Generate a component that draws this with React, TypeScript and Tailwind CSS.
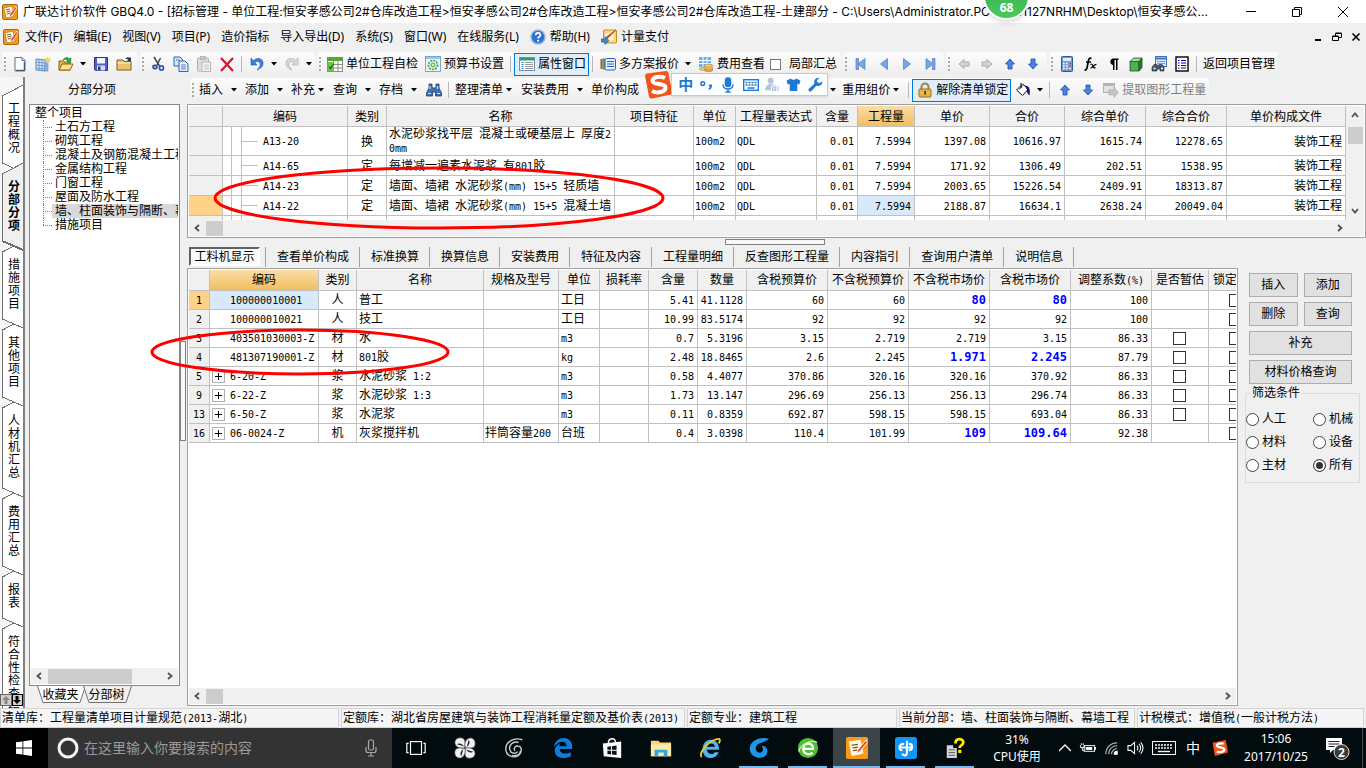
import React from 'react';

const UI_FONT = "font-['Noto_Sans','Noto_Sans_CJK_SC',sans-serif]";

const Sim: React.FC<{ text: string; bold?: boolean }> = ({ text, bold }) => (
  <>
    {text.split(/([\x20-\x7e]+)/).map((part, i) =>
      i % 2 ? (
        <span
          key={i}
          className={
            bold
              ? "font-['DejaVu_Sans_Mono',monospace] text-[12px] font-bold text-[#0000ff]"
              : "font-['DejaVu_Sans_Mono',monospace] text-[10px]"
          }
        >
          {part}
        </span>
      ) : (
        part
      )
    )}
  </>
);

const ICONS: Record<string, React.ReactNode> = {
  app: (
    <>
      <rect x="0.5" y="0.5" width="15" height="15" rx="1.5" fill="#f59a1c" stroke="#b5650a" />
      <path d="M2 4l8-2 2 10-8 2z" fill="#fffbe8" stroke="#a8660c" strokeWidth=".6" />
      <path d="M4 6l4-1M4.500 8l4-1M5 10l4-1" stroke="#7a4a10" strokeWidth=".9" />
      <path d="M14 2L8 10l-1 3 3-1.500L15 4z" fill="#e04a12" stroke="#fff" strokeWidth=".7" />
    </>
  ),
  new: (
    <>
      <path d="M3 1.500h7l3 3V15H3z" fill="#fdfeff" stroke="#5b7391" />
      <path d="M10 1.500v3h3" fill="#cfe0f4" stroke="#5b7391" />
      <path d="M4 14.300h8.300V6" stroke="#2b4160" fill="none" />
    </>
  ),
  gridNew: (
    <>
      <path d="M1 3l9 1v11l-9-1z" fill="#dbe9fb" stroke="#5d86bd" />
      <path d="M1 6l9 1M1 9l9 1M1 12l9 1M4 3.500v11M7 4v11" stroke="#5d86bd" strokeWidth=".8" />
      <path d="M10 5h3v10h-3z" fill="#8fb3de" stroke="#5d86bd" strokeWidth=".6" />
      <path d="M12.500 0l.7 2.500L16 2l-1.600 2L16 6l-2.800-.5L12.500 8l-.7-2.500L9 6l1.600-2L9 2l2.800.5z" fill="#ffd23a" />
    </>
  ),
  open: (
    <>
      <path d="M1 5h5l1 2h5v7H1z" fill="#e4b64a" stroke="#8a6416" />
      <path d="M1 14l3-6h11l-3 6z" fill="#ffe18a" stroke="#8a6416" />
      <path d="M5 4c2-3 5-3 6-1l2-1-.5 5-4.500-1.500L9.700 4.500C9 3 7 3 5 4z" fill="#2fae2f" stroke="#12701a" strokeWidth=".6" />
    </>
  ),
  save: (
    <>
      <path d="M1.500 1.500h13v13h-12l-1-1z" fill="#5363c4" stroke="#2a3580" />
      <rect x="4" y="2" width="8" height="5.500" fill="#f3f5ff" />
      <rect x="4" y="9.500" width="8" height="5" fill="#d6dbf2" />
      <rect x="5" y="10.500" width="2.500" height="4" fill="#2a3580" />
    </>
  ),
  folder: (
    <>
      <path d="M1 4h6l1 1.500h7V14H1z" fill="#e9c46c" stroke="#7a5c22" />
      <path d="M1.500 7h13" stroke="#fff2c4" />
      <path d="M9 3c2-2 4-2 5-1l1-1v4h-4l1.300-1.300C11.500 3 10.500 3 9 3z" fill="#1d3763" />
    </>
  ),
  cut: (
    <>
      <path d="M4 1l5.500 9M10.500 2L7 9" stroke="#3b4a60" strokeWidth="1.500" fill="none" />
      <ellipse cx="5" cy="11" rx="2" ry="1.600" fill="none" stroke="#1d4da5" strokeWidth="1.600" />
      <ellipse cx="11.500" cy="12" rx="2" ry="2.200" fill="none" stroke="#1d4da5" strokeWidth="1.600" />
    </>
  ),
  copy: (
    <>
      <path d="M1 1h6l2.500 2.500V10H1z" fill="#d7e7fb" stroke="#2f62ad" />
      <path d="M6 5h6l3 3v7.500H6z" fill="#e9f2ff" stroke="#2f62ad" />
      <path d="M8 9h5M8 11h5M8 13h5M3 4h4" stroke="#4f80c6" />
    </>
  ),
  paste: (
    <>
      <rect x="1.500" y="2" width="11" height="13" rx="1" fill="#dedede" stroke="#b0b0b0" />
      <rect x="4.500" y="0.500" width="5" height="3" fill="#c6c6c6" stroke="#aaa" strokeWidth=".7" />
      <path d="M6 6h8.500v9.500H6z" fill="#f5f5f5" stroke="#b5b5b5" />
      <path d="M8 9h5M8 11h5M8 13h5" stroke="#c4c4c4" />
    </>
  ),
  del: <path d="M2 2l12 13M14 2L2 15" stroke="#d4142c" strokeWidth="2.200" fill="none" />,
  undo: <path d="M2 2v7h6L5.800 6.800C9 4 12 6 11 9.500c-.4 1.600-1.600 3-3 4.500 4-1.500 6.500-4 6-7.500C13.500 2 8 1 4.300 4.700z" fill="#3c7fe0" stroke="#2459b0" strokeWidth=".6" />,
  redo: <path d="M14 2v7H8l2.200-2.200C7 4 4 6 5 9.500c.4 1.600 1.600 3 3 4.500-4-1.500-6.500-4-6-7.500C2.500 2 8 1 11.700 4.700z" fill="#d9d9d9" stroke="#b5b5b5" strokeWidth=".8" />,
  check: (
    <>
      <rect x="0.500" y="1.500" width="15" height="14" fill="#fff" stroke="#8c8c8c" />
      <rect x="0" y="1" width="16" height="4" fill="#55a63a" />
      <path d="M6.500 5v10M11 5v10M1 8.500h14M1 12h14" stroke="#8c8c8c" />
      <rect x="1" y="6" width="6" height="9" fill="#6fc04e" />
      <path d="M2 10.500l1.500 2L6.500 8" stroke="#1d5d14" fill="none" strokeWidth="1.200" />
    </>
  ),
  gear: (
    <>
      <rect x="0.500" y="0.500" width="15" height="15" fill="#eaf4fb" stroke="#79a8cc" />
      <rect x="1" y="1" width="14" height="2" fill="#9cc7e6" />
      <circle cx="8" cy="9" r="4.500" fill="none" stroke="#4fa04a" strokeWidth="1.700" strokeDasharray="2 1" />
      <circle cx="8" cy="9" r="2" fill="#d4efcf" stroke="#4fa04a" />
    </>
  ),
  props: (
    <>
      <rect x="0.500" y="1.500" width="15" height="13" fill="#fff" stroke="#7d8fa6" />
      <rect x="1" y="2" width="14" height="2.500" fill="#2e9c74" />
      <path d="M2.500 6.500h2M2.500 8.500h2M2.500 10.500h2M2.500 12.500h2" stroke="#2e7fc4" />
      <path d="M6 6.500h8M6 8.500h8M6 10.500h8M6 12.500h8" stroke="#999" />
    </>
  ),
  multi: (
    <>
      <path d="M0.500 3h2v10h-2z" fill="#e23b2e" />
      <path d="M2.500 2.500h2.500v11H2.500z" fill="#4bae4a" />
      <rect x="5" y="2.500" width="10.500" height="11.500" rx="1.500" fill="#e8f0ff" stroke="#2c5fc0" />
      <path d="M7 5.500h7M7 8h7M7 10.500h7" stroke="#2c5fc0" strokeWidth="1.200" />
    </>
  ),
  fee: (
    <>
      <rect x="1" y="1" width="12" height="10" fill="#65b2ea" />
      <path d="M1 4.500h12M1 7.500h12M5 1v10M9 1v10" stroke="#fff" />
      <ellipse cx="10.500" cy="14" rx="4.500" ry="1.600" fill="#e6b04b" stroke="#a87320" strokeWidth=".6" />
      <ellipse cx="10.500" cy="11.800" rx="4.500" ry="1.600" fill="#f4cd7c" stroke="#a87320" strokeWidth=".6" />
      <ellipse cx="10.500" cy="9.600" rx="4.500" ry="1.600" fill="#f4cd7c" stroke="#a87320" strokeWidth=".6" />
      <ellipse cx="4.500" cy="13" rx="3" ry="1.400" fill="#f4cd7c" stroke="#a87320" strokeWidth=".6" />
    </>
  ),
  first: <path d="M3 2.500h2.500v5L12 2.500v11l-6.500-5v5H3z" fill="#7aa4ec" stroke="#3f6cc0" strokeWidth=".6" />,
  prev: <path d="M11.500 2.500v11L4.500 8z" fill="#7aa4ec" stroke="#3f6cc0" strokeWidth=".6" />,
  next: <path d="M4.500 2.500v11l7-5.500z" fill="#7aa4ec" stroke="#3f6cc0" strokeWidth=".6" />,
  last: <path d="M13 2.500h-2.500v5L4 2.500v11l6.500-5v5H13z" fill="#7aa4ec" stroke="#3f6cc0" strokeWidth=".6" />,
  left: <path d="M3 8l5-4.500V6h5v4H8v2.500z" fill="#d2d2d2" stroke="#acacac" />,
  right: <path d="M13 8L8 3.500V6H3v4h5v2.500z" fill="#d2d2d2" stroke="#acacac" />,
  up: <path d="M8 3l4.500 5H10v5H6V8H3.500z" fill="#4a83e6" stroke="#1d4ba5" strokeWidth=".8" />,
  down: <path d="M8 13L3.500 8H6V3h4v5h2.500z" fill="#4a83e6" stroke="#1d4ba5" strokeWidth=".8" />,
  calc: (
    <>
      <rect x="2.500" y="0.500" width="11" height="15" rx="1" fill="#7199d6" stroke="#2f559a" />
      <rect x="4" y="2" width="8" height="3" fill="#dcecff" />
      <path d="M4 7.500h8M4 10h8M4 12.500h8" stroke="#fff" strokeWidth="1.500" strokeDasharray="1.700 1.300" />
      <path d="M10 7.500h2M10 10h2" stroke="#e5402a" strokeWidth="1.300" />
    </>
  ),
  fx: (
    <>
      <path d="M9.500 2.500c-2-1-2.500 0-3 2L5 12c-.4 1.500-1 2.300-2.500 2M4 6h5" stroke="#000" strokeWidth="1.700" fill="none" />
      <path d="M8.500 8.500c1.500-.8 2 0 2.500 1.500s1 2.500 2.500 1.500M14.500 8.500c-2-.5-4 3.500-6 3.500" stroke="#000" strokeWidth="1.200" fill="none" />
    </>
  ),
  para: <path d="M13.500 2.500h-6a3.500 3.500 0 000 6.500H8v5h1.500V4h1.500v10h1.500V4h1z" fill="#000" />,
  cube: (
    <>
      <path d="M2 5.500h9V15H2z" fill="#4fae56" stroke="#17551c" strokeWidth=".8" />
      <path d="M2 5.500L5.500 2H14l-3 3.500z" fill="#a4dba5" stroke="#17551c" strokeWidth=".8" />
      <path d="M11 5.500L14 2v9.500L11 15z" fill="#237a2b" stroke="#17551c" strokeWidth=".8" />
    </>
  ),
  print: (
    <>
      <rect x="4.500" y="0.500" width="11" height="10" fill="#dbe9ff" stroke="#4472b8" />
      <path d="M5 2.500h10" stroke="#4472b8" strokeWidth="2" />
      <path d="M6 5.500h8M6 7.500h8" stroke="#7a9dd2" />
      <path d="M1 11l2-2.500h3l1 1.500 1-1.500h3l2 2.500v4H9v-2H6v2H1z" fill="#47566e" stroke="#232d3d" strokeWidth=".6" />
      <path d="M2.500 12.500h2M10 12.500h2" stroke="#fff" strokeWidth="1.400" />
    </>
  ),
  list: (
    <>
      <rect x="2" y="1" width="12" height="14" fill="#fff" stroke="#000" strokeWidth="1.400" />
      <path d="M4 4.500h1.500M4 7h1.500M4 9.500h1.500M4 12h1.500" stroke="#00f" />
      <path d="M7 4.500h5M7 7h5M7 9.500h5M7 12h5" stroke="#0000a8" />
    </>
  ),
  find: (
    <>
      <path d="M3 2h3v3l1 1h2l1-1V2h3v4l2.500 5v3H9.500v-4h-3v4H.5v-3L3 6z" fill="#3f6fae" stroke="#1f3f70" strokeWidth=".8" />
      <path d="M2 11.500h3M11 11.500h3M4 4v3M11.500 4v3" stroke="#c9defa" strokeWidth="1.200" />
    </>
  ),
  lock: (
    <>
      <path d="M4.500 7V5a3.500 3.500 0 017 0v2" stroke="#9a8350" strokeWidth="2" fill="none" />
      <rect x="2" y="7" width="12" height="8" rx="1" fill="#f2bd4c" stroke="#99691a" />
      <path d="M3 9h10M3 13h10" stroke="#d99a26" strokeWidth=".7" />
      <rect x="7.200" y="9" width="1.800" height="3.500" fill="#5c3d0c" />
    </>
  ),
  bucket: (
    <>
      <path d="M1.500 8l6-6 6 5-6 6.500z" fill="#fff" stroke="#111" />
      <path d="M4 7.500L8 3.500M6 1v5" stroke="#111" />
      <path d="M9.500 3.500c5 0 6 4 5 10-1.500-1-3-3-2.500-6z" fill="#10107a" />
    </>
  ),
  extract: (
    <>
      <rect x="0.500" y="1.500" width="11" height="9" fill="#e3e3e3" stroke="#b0b0b0" />
      <rect x="0" y="1" width="12" height="3" fill="#b5b5b5" />
      <path d="M6 8h5V5.500l4.500 5-4.500 5V13H6z" fill="#c4c4c4" stroke="#a6a6a6" strokeWidth=".6" />
    </>
  ),
  help: (
    <>
      <circle cx="8" cy="8" r="7" fill="#2c73d2" stroke="#9cb8dc" strokeWidth="1.500" />
      <path d="M5.800 6.200c0-3 4.600-3 4.600-.2 0 1.700-2.300 1.800-2.300 3.500" stroke="#fff" strokeWidth="1.700" fill="none" />
      <circle cx="8.100" cy="11.800" r="1.100" fill="#fff" />
    </>
  ),
  pay: (
    <>
      <rect x="2.500" y="1" width="13" height="13" rx="1" fill="#fdd58a" stroke="#cf8d1c" />
      <path d="M4 5l8-2 1 8-7 1z" fill="#fff5d8" />
      <path d="M15 1L7 9l-2 1 1-2.500 4-3z" fill="#d84a1b" stroke="#8e2a0a" strokeWidth=".5" />
      <path d="M0 10h4V7.500L8 11.500l-4 4V13H0z" fill="#2b8fd8" stroke="#145c95" strokeWidth=".6" />
    </>
  ),
};

const Icon: React.FC<{ name: string; className?: string }> = ({ name, className = 'size-4' }) => (
  <svg viewBox="0 0 16 16" className={`${className} shrink-0`} fill="none" aria-hidden="true">
    {ICONS[name]}
  </svg>
);

const Tool = ({ icon, text, active, muted }: { icon: string; text?: string; active?: boolean; muted?: boolean }) => (
  <button
    aria-label={text || icon}
    className={`flex items-center h-[23px] shrink-0 whitespace-nowrap ${text && !active ? 'pr-[3px]' : ''} ${
      active ? 'border border-[#0078d7] bg-[#e1eefa] pr-[2px]' : ''
    } ${muted ? 'text-[#808080]' : ''}`}
  >
    <span className="w-[23px] flex justify-center">
      <Icon name={icon} />
    </span>
    {text}
  </button>
);

const Triangle = () => (
  <svg viewBox="0 0 6 4" className="w-[6px] h-[4px]" aria-hidden="true">
    <path d="M0 0h6L3 3.500z" fill="#000" />
  </svg>
);

const Drop = () => (
  <button aria-label="下拉" className="w-3 h-[23px] flex items-center justify-center shrink-0">
    <Triangle />
  </button>
);

const TextMenu = ({ text, tight }: { text: string; tight?: boolean }) => (
  <button className="flex items-center h-[23px] shrink-0 px-[3px] whitespace-nowrap">
    {text}
    <span className={`flex justify-end ${tight ? 'w-[9px]' : 'w-[14px]'}`}>
      <Triangle />
    </span>
    <span className={tight ? 'w-[3px]' : 'w-[2px]'} />
  </button>
);

const Sep = () => (
  <span className="w-[7px] flex justify-center shrink-0">
    <span className="w-px h-4 bg-[#b8b8b8]" />
  </span>
);

const Handle = () => (
  <span className="w-[6px] flex justify-center shrink-0">
    <span className="w-0 h-[14px] border-l-2 border-dotted border-[#a9a9a9]" />
  </span>
);

const Group: React.FC<{ children: React.ReactNode }> = ({ children }) => (
  <div className="flex items-center h-[25px] shrink-0 rounded-sm bg-linear-to-b from-[#fcfcfc] to-[#ededed]">{children}</div>
);

const TitleBar = () => (
  <header className="flex items-center h-[23px] bg-white pl-[2px] shrink-0">
    <Icon name="app" />
    <h1 className="flex-1 pl-[5px] truncate font-['Inter','Noto_Sans_CJK_SC',sans-serif]">
      广联达计价软件 GBQ4.0 - [招标管理 - 单位工程:恒安孝感公司2#仓库改造工程&gt;恒安孝感公司2#仓库改造工程&gt;恒安孝感公司2#仓库改造工程-土建部分 - C:\Users\Administrator.PC-20141127NRHM\Desktop\恒安孝感公...
    </h1>
    <div className="flex shrink-0">
      <button aria-label="最小化" className="w-[46px] flex justify-center">
        <svg viewBox="0 0 12 12" className="size-3"><path d="M1 5.500h10" stroke="#000" /></svg>
      </button>
      <button aria-label="还原" className="w-[46px] flex justify-center">
        <svg viewBox="0 0 12 12" className="size-3" fill="none" stroke="#000"><path d="M1.500 3.500h7v7h-7zM3.500 3V1.500h7v7H9" /></svg>
      </button>
      <button aria-label="关闭" className="w-[46px] flex justify-center">
        <svg viewBox="0 0 12 12" className="size-3" stroke="#000"><path d="M1 1l10 10M11 1L1 11" /></svg>
      </button>
    </div>
  </header>
);

const MENUS = ['文件(F)', '编辑(E)', '视图(V)', '项目(P)', '造价指标', '导入导出(D)', '系统(S)', '窗口(W)', '在线服务(L)'];

const MenuBar = () => (
  <nav className="flex items-center h-7 pl-[3px] pr-1 shrink-0">
    <Icon name="app" />
    <div className="flex gap-[11px] pl-[6px] flex-1">
      {MENUS.map((m) => (
        <button key={m}>{m}</button>
      ))}
      <button className="flex items-center gap-1"><Icon name="help" />帮助(H)</button>
      <button className="flex items-center gap-1"><Icon name="pay" />计量支付</button>
    </div>
    <div className="flex gap-[7px]">
      <button aria-label="最小化窗口"><svg viewBox="0 0 12 12" className="size-3"><path d="M3 9h6" stroke="#000" strokeWidth="2" /></svg></button>
      <button aria-label="还原窗口"><svg viewBox="0 0 12 12" className="size-3" fill="none" stroke="#000"><path d="M1.500 5.500h6v4h-6zM4.500 5V2.500h6v4H8M1.500 5h6M4.500 2h6" /></svg></button>
      <button aria-label="关闭窗口"><svg viewBox="0 0 12 12" className="size-3" stroke="#000" strokeWidth="1.600"><path d="M2.500 2.500l7 7M9.500 2.500l-7 7" /></svg></button>
    </div>
  </nav>
);

const MainToolbar = () => (
  <div className="flex items-center gap-[2px] h-[26px] pl-[2px] shrink-0">
    <Group>
      <Handle /><Tool icon="new" /><Tool icon="gridNew" /><Tool icon="open" /><Drop /><Tool icon="save" /><Tool icon="folder" />
      <span className="w-[3px]" />
    </Group>
    <Group>
      <Handle /><Tool icon="cut" /><Tool icon="copy" /><Tool icon="paste" /><Tool icon="del" /><Sep />
      <Tool icon="undo" /><Drop /><Tool icon="redo" /><Drop />
    </Group>
    <Group>
      <Handle /><Tool icon="check" text="单位工程自检" /><Tool icon="gear" text="预算书设置" /><Sep />
      <Tool icon="props" text="属性窗口" active /><Sep />
      <Tool icon="multi" text="多方案报价" /><Drop /><Tool icon="fee" text="费用查看" />
      <label className="flex items-center gap-2 pr-1 whitespace-nowrap">
        <input type="checkbox" className="appearance-none size-[11px] ml-[2px] border border-[#777] bg-white" />
        局部汇总
      </label>
    </Group>
    <Group>
      <Handle /><Tool icon="first" /><Tool icon="prev" /><Tool icon="next" /><Tool icon="last" />
      <span className="w-[3px]" />
    </Group>
    <Group>
      <Handle /><Tool icon="left" /><Tool icon="right" /><Tool icon="up" /><Tool icon="down" />
      <span className="w-[3px]" />
    </Group>
    <Group>
      <Handle /><Tool icon="calc" /><Tool icon="fx" /><Tool icon="para" /><Tool icon="cube" /><Tool icon="print" /><Tool icon="list" /><Sep />
      <button className="px-[3px] whitespace-nowrap">返回项目管理</button>
    </Group>
  </div>
);

const ImeBar = () => (
  <div className="absolute -top-2 left-[5px] z-20 flex items-center pointer-events-none">
    <svg viewBox="0 0 28 28" className="size-7 shrink-0">
      <path d="M1 5Q1 3 3 2.600L22 0q2-.2 2.400 2L28 21q.3 2.200-2 2.700L8 27.500q-2.400.5-3-2z" fill="#f2541b" />
      <path d="M21 7C16 4.500 8.500 6 8.500 10s13 2 13 6.500-8 6.500-13.500 3.500" stroke="#fff" strokeWidth="4" fill="none" />
    </svg>
    <div className="flex items-center justify-between w-[157px] h-[23px] -ml-px pl-[6px] pr-1 bg-[#fdfeff] border border-[#b9cbe6] shadow-sm">
      <span className="text-[15px] leading-none font-bold text-[#1c7ad0]">中</span>
      <svg viewBox="0 0 16 16" className="size-[15px]" fill="none" stroke="#1c7ad0"><circle cx="4" cy="7" r="2" strokeWidth="1.600" /><path d="M10.500 9h2.500c0 2-.5 3-2.500 4" strokeWidth="2" /></svg>
      <svg viewBox="0 0 16 16" className="size-4" fill="none" stroke="#1c7ad0" strokeWidth="1.500"><rect x="5.500" y="1" width="5" height="8.500" rx="2.500" fill="#1c7ad0" /><path d="M3 7.500c0 6 10 6 10 0M8 12v3M5.500 15h5" /></svg>
      <svg viewBox="0 0 16 14" className="w-4 h-[14px]" fill="none" stroke="#1c7ad0"><rect x="0.700" y="1.700" width="14.600" height="10.600" strokeWidth="1.400" /><path d="M2.500 4.500h11M2.500 7h11" strokeWidth="1.500" strokeDasharray="2 1" /><path d="M4.500 10h7" strokeWidth="1.500" /></svg>
      <svg viewBox="0 0 16 16" className="size-[15px]" fill="#b4c3da"><circle cx="6" cy="4" r="3.200" /><path d="M0 14c0-8 10-8 12-4v4z" /><path d="M7 9.500h8.500v6H7z" stroke="#fff" /><path d="M9.500 11v3.500M12 11h2v3.500h-2zM12 12.700h2" stroke="#fff" strokeWidth=".8" /></svg>
      <svg viewBox="0 0 16 16" className="size-[15px]" fill="#1c7ad0"><path d="M5 1.500c1 2 5 2 6 0l4.500 2.500-1.500 4-2-.5V15H4V7.500l-2 .5L.5 4z" /></svg>
      <svg viewBox="0 0 16 16" className="size-4" fill="#1c7ad0"><path d="M15.500 4.500a4.500 4.500 0 01-6.200 4.200L3.500 15 1 12.700l6.300-5.900A4.500 4.500 0 0112.500.8L10 3.300l.5 2.200 2.200.5z" /></svg>
    </div>
  </div>
);

const EditToolbar = () => (
  <div className="flex items-center h-[26px] pl-[3px] shrink-0">
    <Group>
      <Handle />
      <TextMenu text="插入" /><TextMenu text="添加" /><TextMenu text="补充" tight /><TextMenu text="查询" /><TextMenu text="存档" />
      <Tool icon="find" /><Sep />
      <TextMenu text="整理清单" tight /><TextMenu text="安装费用" />
      <button className="pl-[3px] whitespace-nowrap">单价构成</button>
      <div className="relative w-[188px] h-[23px]"><ImeBar /></div>
      <Drop />
      <TextMenu text="重用组价" tight /><Sep />
      <Tool icon="lock" text="解除清单锁定" active />
      <Tool icon="bucket" /><Drop /><Sep />
      <Tool icon="up" /><Tool icon="down" /><Tool icon="extract" text="提取图形工程量" muted />
    </Group>
  </div>
);

const SIDE_TABS = ['工程概况', '分部分项', '措施项目', '其他项目', '人材机汇总', '费用汇总', '报表', '符合性检查结果'];

const SideTabs = () => (
  <nav className="relative w-[25px] shrink-0 h-full overflow-hidden bg-[#f6f6f6] border-r-2 border-[#808080] pt-2">
    {SIDE_TABS.map((tab, i) => {
      const active = i === 1;
      return (
        <button key={tab} className="block w-full text-left">
          <svg viewBox="0 0 23 11" className="block w-[23px] h-[11px]" fill="none" shapeRendering="crispEdges">
            {i > 0 && <path d="M2.500 0L23 9V0z" fill={i === 2 ? '#f0f0f0' : '#fff'} />}
            <path d={active || i === 0 ? 'M23 0L2.500 11H23z' : 'M14 5L2.500 11H23V9z'} fill={active ? '#f0f0f0' : '#fff'} />
            {i > 0 && <path d={active ? 'M2.500 0L13 5' : 'M2.500 0L23 9'} stroke="#707070" strokeWidth={i === 2 ? 2 : 1} />}
            <path d={active || i === 0 ? 'M23 0L2.500 11' : 'M14 5L2.500 11'} stroke="#707070" />
          </svg>
          <span className={`block ml-[2px] border-l border-[#707070] pt-[6px] pb-[9px] pl-[5px] ${active ? 'bg-[#f0f0f0] font-bold' : 'bg-white'}`}>
            <span className="block w-3 leading-[13px] break-all">{tab}</span>
          </span>
        </button>
      );
    })}
    <div className="absolute left-0 bottom-[2px] flex w-full h-3">
      <button aria-label="上移" className="flex-1 bg-[#d4d0c8] border border-[#666] flex items-center justify-center">
        <svg viewBox="0 0 8 8" className="size-2"><path d="M4 0l4 4H5.500v4h-3V4H0z" fill="#888" /></svg>
      </button>
      <button aria-label="下移" className="flex-1 bg-[#d4d0c8] border border-black flex items-center justify-center">
        <svg viewBox="0 0 8 8" className="size-2"><path d="M4 8l4-4H5.500V0h-3v4H0z" fill="#000" /></svg>
      </button>
    </div>
  </nav>
);

const Chevron = ({ d }: { d: string }) => (
  <svg viewBox="0 0 8 8" className="size-2 shrink-0" fill="none" stroke="#505050" strokeWidth="1.800"><path d={d} /></svg>
);

const HScroll = ({ thumb }: { thumb: string }) => (
  <div className="flex items-center justify-between h-4 px-1 bg-[#f0f0f0] shrink-0">
    <div className="flex items-center gap-[5px] h-full">
      <Chevron d="M6 1L2.500 4 6 7" />
      <span className={`${thumb} h-[15px] bg-[#cdcdcd]`} />
    </div>
    <Chevron d="M2 1l3.500 3L2 7" />
  </div>
);

const TREE = ['土石方工程', '砌筑工程', '混凝土及钢筋混凝土工程', '金属结构工程', '门窗工程', '屋面及防水工程', '墙、柱面装饰与隔断、幕墙工程', '措施项目'];

const TreePanel = () => (
  <aside className="w-[161px] shrink-0 flex flex-col pl-1">
    <h2 className="h-[27px] pl-[39px] pt-[5px]">分部分项</h2>
    <div className="flex-1 min-h-0 w-[151px] flex flex-col bg-white border border-[#828790] px-px pb-px">
      <div className="flex-1 overflow-hidden pt-px leading-[14px] whitespace-nowrap">
        <p className="pl-1">整个项目</p>
        <ul>
          {TREE.map((t, i) => (
            <li key={t} className="flex h-[14px] pl-3">
              <span className="relative w-[9px] shrink-0">
                <span className={`absolute left-0 top-0 border-l border-dotted border-[#808080] ${i === TREE.length - 1 ? 'h-[7px]' : 'h-[14px]'}`} />
                <span className="absolute left-0 top-[7px] w-[9px] border-t border-dotted border-[#808080]" />
              </span>
              <span className={`pl-[3px] ${i === 6 ? 'flex-1 bg-[#d9d9d9]' : ''}`}>{t}</span>
            </li>
          ))}
        </ul>
      </div>
      <HScroll thumb="w-[84px]" />
    </div>
    <div className="flex h-[22px] pl-2 items-start">
      {['收藏夹', '分部树'].map((t, i) => (
        <button key={t} className="relative w-[46px] h-[17px] leading-[17px] whitespace-nowrap">
          <svg viewBox="0 0 49 17" className="absolute left-0 top-0 w-[49px] h-[17px]">
            <path d="M0.500 0L6 16.500h37L48.500 0" fill={i ? '#f0f0f0' : '#fff'} stroke="#707070" />
          </svg>
          <span className="relative pl-px">{t}</span>
        </button>
      ))}
    </div>
  </aside>
);

const HEAD = 'border-r border-b border-[#c0c0c0] font-normal bg-[#f0f0f0] overflow-hidden whitespace-nowrap p-0';
const HEAD_HOT = 'border-r border-b border-[#c0c0c0] font-normal bg-linear-to-b from-[#fbdca6] to-[#f2bf5e] overflow-hidden whitespace-nowrap p-0';
const CELL = 'border-r border-b border-[#c0c0c0] overflow-hidden py-0 pl-px pr-[3px]';

interface QuotaRow {
  code: string;
  kind: string;
  name: string;
  values: string[];
}

const QUOTA_HEADS = ['', '编码', '类别', '名称', '项目特征', '单位', '工程量表达式', '含量', '工程量', '单价', '合价', '综合单价', '综合合价', '单价构成文件'];
const QUOTA_COLS = ['w-[34px]', 'w-[125px]', 'w-[39px]', 'w-[228px]', 'w-[79px]', 'w-[42px]', 'w-[81px]', 'w-[41px]', 'w-[57px]', 'w-[75px]', 'w-[75px]', 'w-[81px]', 'w-[81px]', ''];

const QUOTAS: QuotaRow[] = [
  { code: 'A13-20', kind: '换', name: '水泥砂浆找平层 混凝土或硬基层上 厚度20mm', values: ['1397.08', '10616.97', '1615.74', '12278.65'] },
  { code: 'A14-65', kind: '定', name: '每增减一遍素水泥浆 有801胶', values: ['171.92', '1306.49', '202.51', '1538.95'] },
  { code: 'A14-23', kind: '定', name: '墙面、墙裙 水泥砂浆(mm) 15+5 轻质墙', values: ['2003.65', '15226.54', '2409.91', '18313.87'] },
  { code: 'A14-22', kind: '定', name: '墙面、墙裙 水泥砂浆(mm) 15+5 混凝土墙', values: ['2188.87', '16634.1', '2638.24', '20049.04'] },
];

const TreeLines = ({ leaf }: { leaf?: boolean }) => (
  <>
    <span className="w-[9px] border-r border-[#c0c0c0]" />
    <span className="w-[10px] border-r border-[#c0c0c0]" />
    {leaf && <span className="w-4 h-px self-center bg-[#c0c0c0]" />}
  </>
);

const QuotaGrid = () => (
  <section className="h-[134px] flex flex-col bg-white border border-[#a0a0a0] p-px shrink-0">
    <div className="flex flex-1 min-h-0">
      <div className="flex-1 min-w-0 overflow-hidden">
        <table className="w-full table-fixed border-separate border-spacing-0 leading-[13px]">
          <colgroup>
            {QUOTA_COLS.map((c, i) => <col key={i} className={c} />)}
          </colgroup>
          <thead>
            <tr className="h-[21px]">
              {QUOTA_HEADS.map((h, i) => <th key={i} className={i === 8 ? HEAD_HOT : HEAD}>{h}</th>)}
            </tr>
          </thead>
          <tbody>
            {QUOTAS.map((q, i) => (
              <tr key={q.code} className={i === 0 ? 'h-[29px]' : 'h-5'}>
                <td className={`border-r border-b border-[#c0c0c0] ${i === 3 ? 'bg-[#ffd28a]' : 'bg-[#f0f0f0]'}`} />
                <td className="border-r border-b border-[#c0c0c0] p-0">
                  <div className={`flex ${i === 0 ? 'h-7' : 'h-[19px]'}`}>
                    <TreeLines leaf />
                    <span className="pl-[5px] self-center"><Sim text={q.code} /></span>
                  </div>
                </td>
                <td className="border-r border-b border-[#c0c0c0] p-0 text-center">{q.kind}</td>
                <td className="border-r border-b border-[#c0c0c0] overflow-hidden py-0 pl-[2px] pr-0 break-all"><Sim text={q.name} /></td>
                <td className={CELL} />
                <td className={`${CELL} whitespace-nowrap`}><Sim text="100m2" /></td>
                <td className={CELL}><Sim text="QDL" /></td>
                <td className={`${CELL} text-right`}><Sim text="0.01" /></td>
                <td className={`${CELL} text-right ${i === 3 ? 'bg-[#d8eaf9]' : ''}`}><Sim text="7.5994" /></td>
                {q.values.map((v) => <td key={v} className={`${CELL} text-right`}><Sim text={v} /></td>)}
                <td className={`${CELL} text-right`}>装饰工程</td>
              </tr>
            ))}
            <tr className="h-5">
              <td className="border-r border-b border-[#c0c0c0] bg-[#f0f0f0]" />
              <td className="border-r border-b border-[#c0c0c0] p-0"><div className="flex h-[19px]"><TreeLines /></div></td>
              {QUOTA_HEADS.slice(2).map((h) => <td key={h} className={CELL} />)}
            </tr>
          </tbody>
        </table>
      </div>
      <div className="w-[18px] bg-[#f0f0f0] flex flex-col items-center py-[5px] shrink-0">
        <Chevron d="M1 6l3-3.500L7 6" />
        <span className="w-[15px] h-[17px] mt-2 bg-[#cdcdcd]" />
        <span className="flex-1" />
        <Chevron d="M1 2l3 3.500L7 2" />
      </div>
    </div>
    <div className="pr-4 bg-[#f0f0f0]"><HScroll thumb="w-[17px]" /></div>
  </section>
);

const DETAIL_TABS = ['查看单价构成', '标准换算', '换算信息', '安装费用', '特征及内容', '工程量明细', '反查图形工程量', '内容指引', '查询用户清单', '说明信息'];

const DetailTabs = () => (
  <div className="flex items-center h-[23px] pl-[2px] shrink-0">
    <button className="h-[19px] w-[71px] bg-[#fafafa] border-2 border-t-[#606060] border-l-[#606060] border-r-white border-b-white whitespace-nowrap">
      <span className="block leading-[15px]">工料机显示</span>
    </button>
    <span className="w-[6px] h-5 border-r border-[#a0a0a0]" />
    {DETAIL_TABS.map((t) => (
      <button key={t} className="h-5 pl-[11px] pr-[10px] border-r border-[#a0a0a0] whitespace-nowrap">{t}</button>
    ))}
  </div>
);

const RES_HEADS = ['', '编码', '类别', '名称', '规格及型号', '单位', '损耗率', '含量', '数量', '含税预算价', '不含税预算价', '不含税市场价', '含税市场价', '调整系数(%)', '是否暂估', '锁定'];
const RES_COLS = ['w-[21px]', 'w-[109px]', 'w-[38px]', 'w-[127px]', 'w-[75px]', 'w-[41px]', 'w-[49px]', 'w-[49px]', 'w-[49px]', 'w-[81px]', 'w-[81px]', 'w-[81px]', 'w-[81px]', 'w-[81px]', 'w-[57px]', 'w-[56px]'];

interface Resource {
  no: string;
  code: string;
  kind: string;
  name: string;
  spec?: string;
  unit: string;
  nums: string[];
  expand?: boolean;
  changed?: boolean;
  estimate?: boolean;
}

const RESOURCES: Resource[] = [
  { no: '1', code: '100000010001', kind: '人', name: '普工', unit: '工日', nums: ['5.41', '41.1128', '60', '60', '80', '80', '100'], changed: true },
  { no: '2', code: '100000010021', kind: '人', name: '技工', unit: '工日', nums: ['10.99', '83.5174', '92', '92', '92', '92', '100'] },
  { no: '3', code: '403501030003-Z', kind: '材', name: '水', unit: 'm3', nums: ['0.7', '5.3196', '3.15', '2.719', '2.719', '3.15', '86.33'], estimate: true },
  { no: '4', code: '481307190001-Z', kind: '材', name: '801胶', unit: 'kg', nums: ['2.48', '18.8465', '2.6', '2.245', '1.971', '2.245', '87.79'], changed: true, estimate: true },
  { no: '5', code: '6-20-Z', kind: '浆', name: '水泥砂浆 1:2', unit: 'm3', nums: ['0.58', '4.4077', '370.86', '320.16', '320.16', '370.92', '86.33'], expand: true, estimate: true },
  { no: '9', code: '6-22-Z', kind: '浆', name: '水泥砂浆 1:3', unit: 'm3', nums: ['1.73', '13.147', '296.69', '256.13', '256.13', '296.74', '86.33'], expand: true, estimate: true },
  { no: '13', code: '6-50-Z', kind: '浆', name: '水泥浆', unit: 'm3', nums: ['0.11', '0.8359', '692.87', '598.15', '598.15', '693.04', '86.33'], expand: true, estimate: true },
  { no: '16', code: '06-0024-Z', kind: '机', name: '灰浆搅拌机', spec: '拌筒容量200', unit: '台班', nums: ['0.4', '3.0398', '110.4', '101.99', '109', '109.64', '92.38'], expand: true, changed: true },
];

const CellCheck = ({ label }: { label: string }) => (
  <input type="checkbox" aria-label={label} className="appearance-none block mx-auto size-[13px] border border-[#333] bg-white" />
);

const ResourceGrid = () => (
  <section className="flex-1 min-w-0 flex flex-col bg-white border border-[#a0a0a0] p-px">
    <div className="flex-1 overflow-hidden">
      <table className="w-[1076px] table-fixed border-separate border-spacing-0 leading-[14px]">
        <colgroup>
          {RES_COLS.map((c, i) => <col key={i} className={c} />)}
        </colgroup>
        <thead>
          <tr className="h-[21px]">
            {RES_HEADS.map((h, i) => (
              <th key={i} className={i === 1 ? HEAD_HOT : HEAD}>
                {i === 15 ? <span className="block text-left pl-1">{h}</span> : <Sim text={h} />}
              </th>
            ))}
          </tr>
        </thead>
        <tbody>
          {RESOURCES.map((r, i) => (
            <tr key={r.no} className="h-[19px]">
              <td className={`border-r border-b border-[#c0c0c0] p-0 text-center ${i === 0 ? 'bg-[#ffd28a]' : 'bg-[#f0f0f0]'}`}><Sim text={r.no} /></td>
              <td className={`border-r border-b border-[#c0c0c0] p-0 whitespace-nowrap ${i === 0 ? 'bg-[#d8eaf9]' : ''}`}>
                <div className="flex items-center">
                  <span className="w-5 shrink-0 pl-[2px]">
                    {r.expand && (
                      <button aria-label="展开" className="block size-[13px] border border-[#b0b0b0]">
                        <svg viewBox="0 0 11 11" className="size-[11px]" stroke="#000"><path d="M2 5.500h7M5.500 2v7" /></svg>
                      </button>
                    )}
                  </span>
                  <span><Sim text={r.code} /></span>
                </div>
              </td>
              <td className="border-r border-b border-[#c0c0c0] p-0 text-center">{r.kind}</td>
              <td className="border-r border-b border-[#c0c0c0] overflow-hidden py-0 px-[2px]"><Sim text={r.name} /></td>
              <td className={`${CELL} whitespace-nowrap`}>{r.spec && <Sim text={r.spec} />}</td>
              <td className="border-r border-b border-[#c0c0c0] py-0 px-[2px]"><Sim text={r.unit} /></td>
              <td className={CELL} />
              {r.nums.map((n, k) => (
                <td key={k} className={`${CELL} text-right`}>
                  <Sim text={n} bold={r.changed && (k === 4 || k === 5)} />
                </td>
              ))}
              <td className={CELL}>{r.estimate && <CellCheck label={`是否暂估 ${r.no}`} />}</td>
              <td className={CELL}><CellCheck label={`锁定 ${r.no}`} /></td>
            </tr>
          ))}
        </tbody>
      </table>
    </div>
    <HScroll thumb="w-[17px]" />
  </section>
);

const PANEL_BTN = 'h-6 bg-[#e1e1e1] border border-[#adadad]';

const FilterPanel = () => (
  <aside className="w-[128px] shrink-0 pl-[7px] pr-[6px] pt-[5px]">
    <div className="grid grid-cols-2 gap-x-[6px] gap-y-[5px] pl-1 pr-2">
      <button className={PANEL_BTN}>插入</button>
      <button className={PANEL_BTN}>添加</button>
      <button className={PANEL_BTN}>删除</button>
      <button className={PANEL_BTN}>查询</button>
      <button className={`${PANEL_BTN} col-span-2`}>补充</button>
      <button className={`${PANEL_BTN} col-span-2`}>材料价格查询</button>
    </div>
    <fieldset className="h-[99px] border border-[#dcdcdc]">
      <legend className="ml-[5px] px-px leading-[18px]">筛选条件</legend>
      <div className="grid grid-cols-[67px_1fr] gap-y-[5px] pt-2">
        {['人工', '机械', '材料', '设备', '主材', '所有'].map((t) => (
          <label key={t} className="flex items-center gap-[3px] leading-[18px] whitespace-nowrap">
            <input
              type="radio"
              name="filter"
              defaultChecked={t === '所有'}
              className="appearance-none shrink-0 size-[13px] rounded-full border border-[#444] bg-white checked:bg-[#333] checked:shadow-[inset_0_0_0_2px_white]"
            />
            {t}
          </label>
        ))}
      </div>
    </fieldset>
  </aside>
);

const StatusBar = () => (
  <footer className="flex gap-[2px] h-5 pr-[2px] leading-[18px] whitespace-nowrap shrink-0">
    <span className="w-[339px] pl-px border border-[#d4d4d4] bg-[#f5f5f5]"><Sim text="清单库：工程量清单项目计量规范(2013-湖北)" /></span>
    <span className="w-[344px] pl-px border border-[#d4d4d4] bg-[#f5f5f5]"><Sim text="定额库：湖北省房屋建筑与装饰工程消耗量定额及基价表(2013)" /></span>
    <span className="w-[210px] pl-px border border-[#d4d4d4] bg-[#f5f5f5]">定额专业：建筑工程</span>
    <span className="w-[236px] pl-px border border-[#d4d4d4] bg-[#f5f5f5]">当前分部：墙、柱面装饰与隔断、幕墙工程</span>
    <span className="flex-1 pl-px border border-[#d4d4d4] bg-[#f5f5f5]"><Sim text="计税模式：增值税(一般计税方法)" /></span>
  </footer>
);

const TASK_ICONS: { label: string; open?: boolean; active?: boolean; art: React.ReactNode }[] = [
  { label: '任务视图', art: <g fill="none" stroke="#fff" strokeWidth="1.300"><rect x="6" y="5" width="12" height="14" /><path d="M4 7H2v10h2M20 7h2v10h-2" /></g> },
  {
    label: '风扇',
    art: (
      <g fill="#f0f0f0">
        {[0, 90, 180, 270].map((a) => (
          <path key={a} transform={`rotate(${a} 12 12)`} d="M11.500 12C5 13 1 10 1 6c0-5 6-6 9-4.500 2.500 1.500 2.500 6 1.500 10.500zM10.500 10C9 8 6 6.500 3.500 8" stroke="#444" strokeWidth=".7" />
        ))}
      </g>
    ),
  },
  { label: '旋涡', art: <g fill="none" stroke="#cfcfcf" strokeWidth="1.500"><path d="M21 3C12 0 3 5 3 13c0 7 8 11 14 7 4-3 4-9 0-10-3-1-6 2-4 5" /><path d="M17 6c-6-2-11 3-9.500 8 1 4 6 5 8.500 2M10 20c5 1 9-1 9-5" /></g> },
  { label: 'Edge', art: <path d="M2 11C3 4 8 1 13 1c6 0 9 5 9 9v3H8.500c.5 6 7 6 12 3.500V21C14 24.500 3 24 3 14.500 3 11 6 8 9 7 8 8 8 9 8 10h8c0-6-8-7-14 1z" fill="#0f7bdc" /> },
  { label: '应用商店', art: <g><path d="M2 7l20-2v18L3 21z" fill="#fff" /><path d="M8 7c0-6 7-7 8-1" fill="none" stroke="#fff" strokeWidth="1.600" /><path d="M7 10.500l4-.5v4H7zM12 10l5-.7V14h-5zM7 15h4v4l-4-.5zM12 15h5v4.600l-5-.6z" fill="#0a1214" /></g> },
  { label: '资源管理器', art: <g><path d="M1 4h8l2 2h12v15H1z" fill="#f5d778" /><path d="M1 8h22v13H1z" fill="#fde9a1" /><path d="M5 21v-7h14v7h-4v-4H9v4z" fill="#2fa6e6" /></g> },
  { label: 'IE', art: <g><path d="M12.500 3c6 0 9.500 4.500 9.500 11H8.500c.5 5 7 6 8.500 2.500h4.500C18 26 4 25 4 13.500 4 7 8 3 12.500 3zM8.500 10.500h9c-1-4.500-8-4.500-9 0z" fill="#4fb4f0" /><path d="M3 22C-1 17 12 2 22 2c1 1 1 3-.5 5" fill="none" stroke="#f3c52f" strokeWidth="2" /></g> },
  { label: '广联达', open: true, art: <path d="M23 2C12-1 1 5 2 14c1 10 17 12 19 3 1-5-3-8-6-7 2 2 2 6-1 7-4 1-7-3-5-7C11 6 17 7 23 2z" fill="#1d95e8" /> },
  { label: '浏览器', open: true, art: <g><circle cx="12" cy="12" r="11" fill="#4bbf35" /><path d="M17 17c-4 4-11 1-10-5 1-7 11-6 10.500 1H8" fill="none" stroke="#fff" strokeWidth="2.600" /><path d="M2 16C3 9 15 2 22 6" fill="none" stroke="#d8f5b5" strokeWidth="1.300" /></g> },
  { label: '计价软件', open: true, active: true, art: <g><rect x="0" y="0" width="24" height="24" rx="2" fill="#f59a1c" /><path d="M3 5l13-2 3 15-13 3z" fill="#fff9e4" /><path d="M6 9l7-1M7 12l6-1M7.500 15l5-1" stroke="#7a4a10" strokeWidth="1.300" /><path d="M22 3L13 14l-2 4 4-2 8-10z" fill="#e04a12" stroke="#fff" /></g> },
  { label: '加密锁', open: true, art: <g><rect width="24" height="24" rx="3" fill="#1295f5" /><path d="M13 4v13c0 4-4 4-5 1M6 11.500h13M10 7.500c-6 0-7 7-2 7M15 7.500c5 0 5 7 0 7" fill="none" stroke="#fff" strokeWidth="2.200" /></g> },
  { label: '帮助驱动', open: true, art: <g><path d="M3 9h7v3h4v11H3z" fill="#d5d5d5" /><path d="M5 14h7M5 17h7M5 20h7" stroke="#555" /><path d="M12.500 7c0-6 8.500-6 8.500-1 0 3-4 3-4 6" fill="none" stroke="#ffeb00" strokeWidth="3" /><rect x="15.500" y="14" width="3.500" height="3.500" fill="#ffeb00" /></g> },
];

const Taskbar = () => (
  <footer className="flex h-10 bg-[#020b0e] text-white shrink-0">
    <button aria-label="开始" className="w-12 bg-black flex items-center justify-center">
      <svg viewBox="0 0 16 16" className="size-4" fill="#fff"><path d="M0 2.300L6.500 1.400v6.200H0zM7.300 1.300L16 0v7.600H7.300zM0 8.400h6.500v6.200L0 13.700zM7.300 8.400H16V16l-8.700-1.300z" /></svg>
    </button>
    <label className="w-[344px] bg-[#333] flex items-center pl-[9px] pr-[14px]">
      <svg viewBox="0 0 22 22" className="size-[22px] shrink-0"><circle cx="11" cy="11" r="9" fill="none" stroke="#f4f4f4" strokeWidth="3" /></svg>
      <input type="text" aria-label="搜索" placeholder="在这里输入你要搜索的内容" className="flex-1 min-w-0 pl-[5px] bg-transparent text-[14px] outline-none placeholder:text-[#9a9a9a]" />
      <svg viewBox="0 0 14 20" className="w-[14px] h-5" fill="none" stroke="#a8a8a8" strokeWidth="1.200"><rect x="4.500" y="2" width="5" height="10" rx="1.500" /><path d="M2 9v3.500q0 2 2 2h6q2 0 2-2V9M7 14.500V18M4 18h6" /></svg>
    </label>
    <div className="flex gap-[2px]">
      {TASK_ICONS.map((t) => (
        <button
          key={t.label}
          aria-label={t.label}
          className={`relative w-[47px] flex items-center justify-center ${t.active ? 'bg-[#3b4548]' : ''}`}
        >
          <svg viewBox="0 0 24 24" className="size-[22px]">{t.art}</svg>
          {t.open && <span className={`absolute bottom-0 h-[2px] bg-[#76b9ed] ${t.active ? 'inset-x-0' : 'inset-x-1'}`} />}
        </button>
      ))}
    </div>
    <div className="flex-1" />
    <div className="w-[76px] text-center leading-[17px] pt-[3px]">31%<br />CPU使用</div>
    <div className="flex items-center gap-2 pl-1">
      <svg viewBox="0 0 12 12" className="size-3" fill="none" stroke="#fff" strokeWidth="1.300"><path d="M0 9l6-6 6 6" /></svg>
      <svg viewBox="0 0 18 16" className="w-[17px] h-4" fill="none" stroke="#fff"><rect x="5.500" y="5.500" width="11" height="6" /><rect x="7.500" y="7.500" width="6" height="2" fill="#fff" /><path d="M17.500 7v3M1.500 5v2.500h4V5M2.500 3v2M4.500 3v2M3.500 8v2.500h2" /></svg>
      <svg viewBox="0 0 16 16" className="size-[15px]" fill="none" stroke="#aaa" strokeWidth="1.300"><path d="M2 14C2 7 7 2 14 2M5 14c0-5 4-9 9-9M8 14c0-3 3-6 6-6" /><path d="M11 14c0-2 1-3 3-3v3z" fill="#fff" stroke="#fff" /></svg>
      <svg viewBox="0 0 18 16" className="w-[17px] h-4" fill="none" stroke="#fff" strokeWidth="1.100"><path d="M1 5.500h3l4-3.500v12L4 10.500H1zM10.500 5.500q2 2.500 0 5M12.500 3.500q4 4.500 0 9M14.500 2q5 6 0 12" /></svg>
      <svg viewBox="0 0 24 14" className="w-6 h-[14px]" fill="none" stroke="#fff"><rect x="0.500" y="0.500" width="23" height="13" /><path d="M3 4h18M3 7h18" strokeWidth="1.400" strokeDasharray="2 1" /><path d="M6 10.500h12" strokeWidth="1.400" /></svg>
      <span className="text-[14px] pl-[2px]">中</span>
      <svg viewBox="0 0 28 28" className="size-4 ml-1"><path d="M1 5L24 0l4 22L5 28z" fill="#f2541b" /><path d="M20.500 6.500C16 5 8.500 6.500 8.500 10s13 2 13 6.500-8 6-13 3.500" stroke="#fff" strokeWidth="4" fill="none" /></svg>
    </div>
    <div className="w-[96px] text-center leading-[18px] pt-[2px]">15:06<br />2017/10/25</div>
    <button aria-label="通知" className="w-[38px] flex items-center">
      <svg viewBox="0 0 26 26" className="size-[26px]">
        <path d="M2 3h16v12H9l-3 3v-3H2z" fill="#fff" /><path d="M4.500 6.500h11M4.500 9h11M4.500 11.500h6" stroke="#222" strokeWidth="1.100" />
        <circle cx="17.500" cy="17" r="7.500" fill="#3c3c3c" stroke="#ddd" />
        <text x="17.500" y="21.500" textAnchor="middle" fontSize="12" fontWeight="bold" fill="#fff">2</text>
      </svg>
    </button>
    <span className="w-1 border-l border-[#4a4f50]" />
  </footer>
);

export default function App() {
  return (
    <div className={`relative h-screen w-full overflow-hidden flex flex-col bg-[#f0f0f0] text-black text-xs ${UI_FONT}`}>
      <TitleBar />
      <MenuBar />
      <MainToolbar />
      <main className="flex flex-1 min-h-0">
        <SideTabs />
        <TreePanel />
        <div className="flex-1 min-w-0 flex flex-col pl-px">
          <EditToolbar />
          <span className="h-px shrink-0" />
          <QuotaGrid />
          <div className="flex justify-center h-[7px] pr-1 shrink-0">
            <span className="w-[100px] h-[6px] mt-px border border-[#808080] bg-[#f8f8f8]" />
          </div>
          <DetailTabs />
          <div className="flex flex-1 min-h-0 pb-[2px]">
            <ResourceGrid />
            <FilterPanel />
          </div>
        </div>
      </main>
      <StatusBar />
      <Taskbar />

      <span className="absolute left-[180px] top-[341px] w-[6px] h-[100px] border border-[#808080] bg-[#f8f8f8]" />

      {/* red pen marks over both grids */}
      <svg viewBox="0 0 452 64" className="absolute left-[213px] top-[166px] w-[452px] h-16 pointer-events-none">
        <ellipse cx="226" cy="32" rx="224" ry="30" fill="none" stroke="#ff0000" strokeWidth="3" />
      </svg>
      <svg viewBox="0 0 300 48" className="absolute left-[150px] top-[328px] w-[300px] h-12 pointer-events-none">
        <ellipse cx="150" cy="24" rx="148" ry="22" fill="none" stroke="#ff0000" strokeWidth="3" />
      </svg>

      <div className="absolute right-[336px] -top-[27px] size-[47px] rounded-full border-2 border-white bg-linear-to-b from-[#2fa84f] to-[#4cc95c] shadow-md flex items-end justify-center pb-[3px] text-white font-bold leading-[14px]">
        68
      </div>
    </div>
  );
}
